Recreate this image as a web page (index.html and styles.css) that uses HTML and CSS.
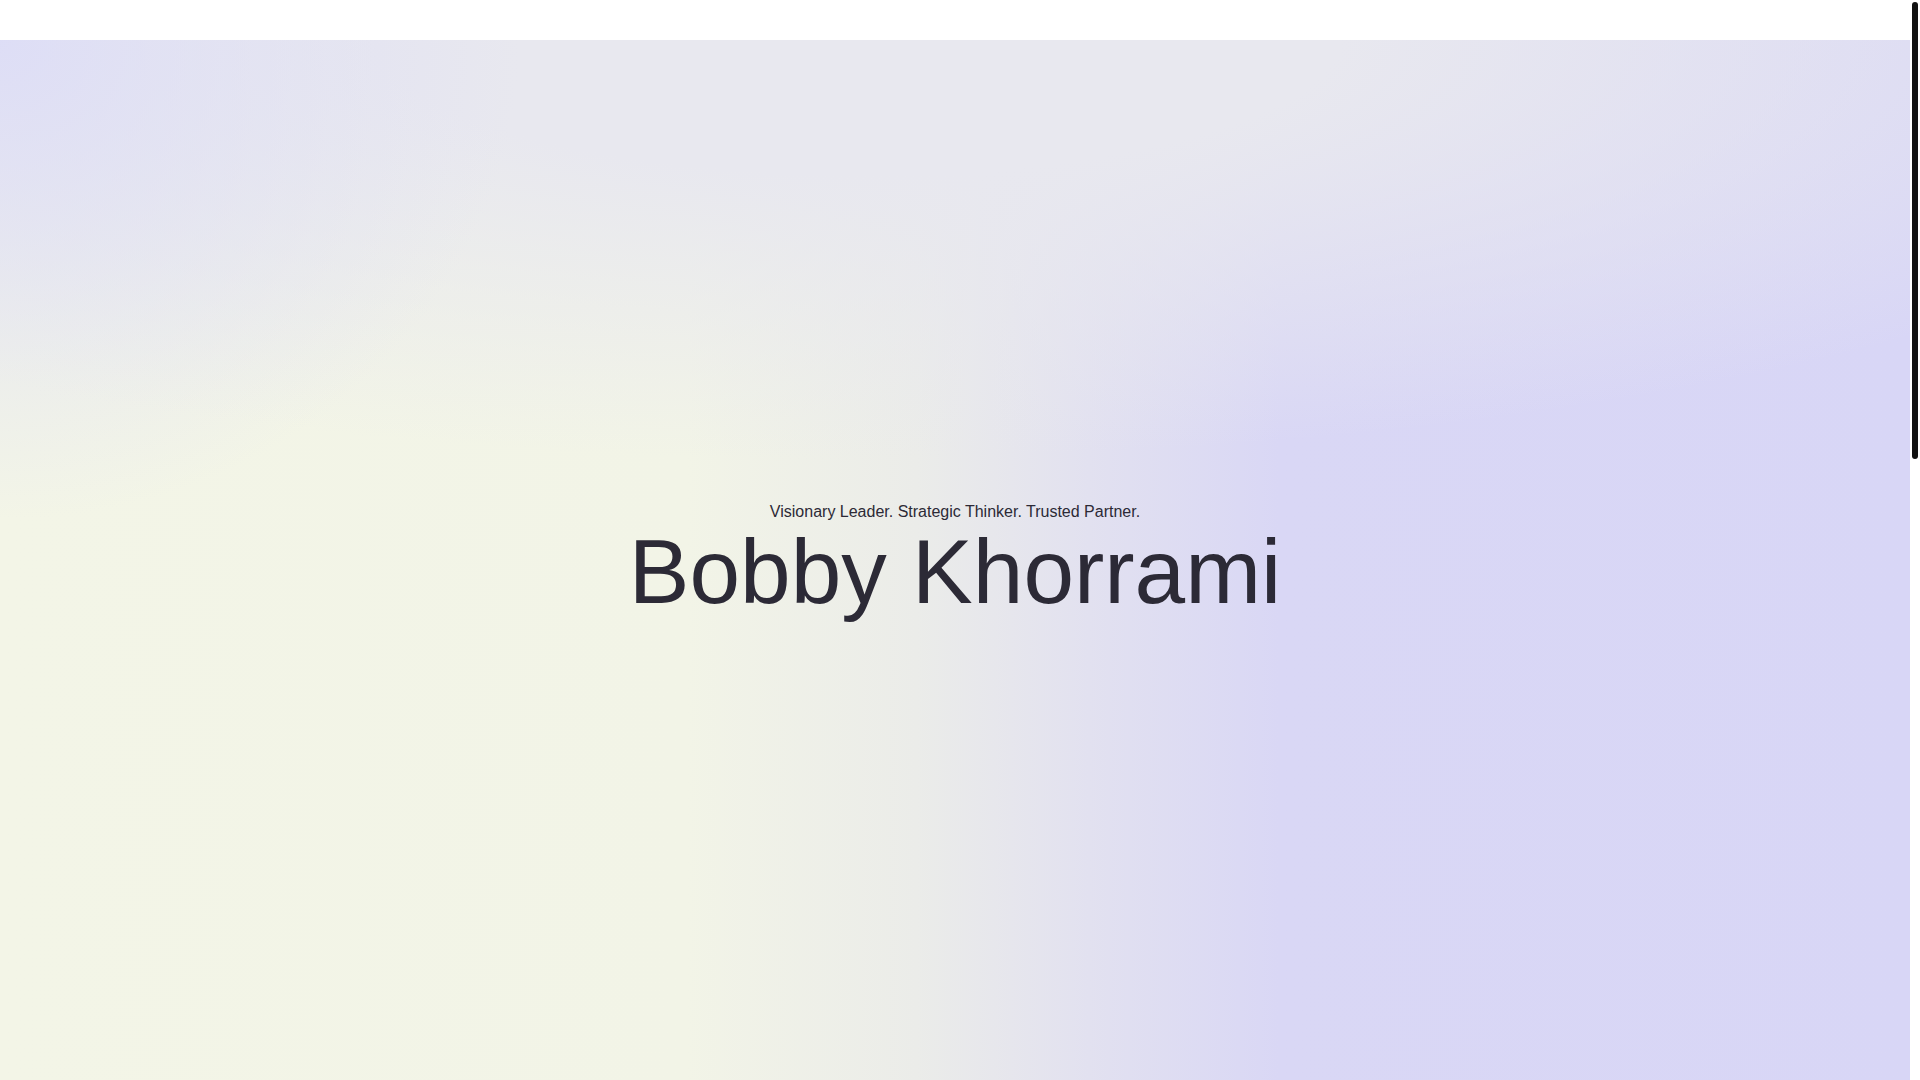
FILE: index.html
```html
<!DOCTYPE html>
<html lang="en">
<head>
<meta charset="utf-8">
<title>Bobby Khorrami</title>
<link rel="stylesheet" href="styles.css">
</head>
<body>
<header class="site-header"></header>
<main class="page">
  <section class="hero">
    <div class="hero-inner">
      <p class="hero-tagline">Visionary Leader. Strategic Thinker. Trusted Partner.</p>
      <h1 class="hero-name">Bobby Khorrami</h1>
    </div>
  </section>
  <section class="below-fold"></section>
</main>
<div class="scrollbar" aria-hidden="true"><div class="scrollbar-thumb"></div></div>
</body>
</html>
```

FILE: styles.css
```css
html, body {
  margin: 0;
  padding: 0;
}

body {
  padding-right: 10px;
  font-family: "Liberation Sans", Arial, sans-serif;
  color: #2c2a36;
  background: #ffffff;
}

.site-header {
  height: 40px;
  background: #ffffff;
}

.hero {
  height: 1040px;
  display: flex;
  align-items: center;
  justify-content: center;
  background:
    radial-gradient(520px 480px at 0 0, rgba(220, 220, 247, 0.9) 0%, rgba(220, 220, 247, 0) 100%),
    radial-gradient(1500px 420px at 45% 0, #e8e8ef 0%, #e8e8ef 32%, rgba(232, 232, 239, 0) 100%),
    linear-gradient(90deg, #f3f5e7 0%, #f2f4e7 36%, #ebece9 48%, #e2e1f0 57%, #d9d7f5 67%, #d8d6f6 100%);
}

.hero-inner {
  display: flex;
  flex-direction: column;
  align-items: center;
  text-align: center;
  padding-top: 4px;
}

.hero-tagline {
  margin: 0;
  font-size: 16px;
  line-height: 24px;
  color: #2c2a36;
}

.hero-name {
  margin: -4px 0 0;
  font-size: 91px;
  line-height: 1.15;
  font-weight: 400;
  color: #2c2a36;
}

.below-fold {
  height: 1450px;
  background: #ffffff;
}

.scrollbar {
  position: fixed;
  top: 0;
  right: 0;
  width: 10px;
  height: 100vh;
  background: #ffffff;
  padding: 2px;
  box-sizing: border-box;
}

.scrollbar-thumb {
  width: 6px;
  height: 457px;
  background: #111111;
  border-radius: 3px;
}
```
